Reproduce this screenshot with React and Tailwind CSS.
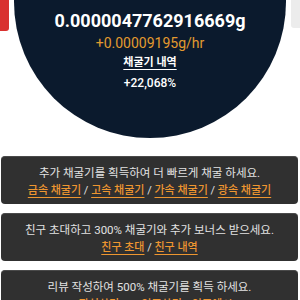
export default function App() {
  const font = { fontFamily: 'Roboto, "Noto Sans CJK KR", sans-serif' };
  return (
    <div className="relative w-[300px] h-[300px] overflow-hidden bg-white" style={font}>
      <div className="absolute left-0 top-0 w-[9px] h-[31px] bg-[#d9312f] rounded-br-[3px]" />
      <div className="absolute right-0 top-0 w-[9px] h-[28px] bg-[#ececec] rounded-bl-[3px]" />

      <div className="mx-auto -mt-[134px] w-[272px] h-[272px] rounded-full bg-[#0b1a2d] flex flex-col items-center pt-[143px]">
        <div className="text-[18px] leading-[24px] font-bold text-white">0.0000047762916669g</div>
        <div className="text-[14px] leading-[20px] text-[#e39a2f]">+0.00009195g/hr</div>
        <div className="text-[11px] leading-[20px] font-bold text-white underline underline-offset-[3px]">채굴기 내역</div>
        <div className="text-[12px] leading-[20px] font-medium text-white">+22,068%</div>
      </div>

      <div className="mt-[18px] ml-px mr-[2px] flex flex-col gap-[9px]">
        <div className="rounded-[4px] bg-[#303030] border-t border-[#4a4a4a] pt-[7px] pb-[4px] text-center leading-[18px]">
          <div className="text-[11.5px] text-[#e2e2e2]">추가 채굴기를 획득하여 더 빠르게 채굴 하세요.</div>
          <div className="text-[11px] text-[#e2e2e2]">
            <span className="text-[#ee9630] font-medium underline underline-offset-[3px]">금속 채굴기</span> /{' '}
            <span className="text-[#ee9630] font-medium underline underline-offset-[3px]">고속 채굴기</span> /{' '}
            <span className="text-[#ee9630] font-medium underline underline-offset-[3px]">가속 채굴기</span> /{' '}
            <span className="text-[#ee9630] font-medium underline underline-offset-[3px]">광속 채굴기</span>
          </div>
        </div>

        <div className="rounded-[4px] bg-[#303030] border-t border-[#4a4a4a] pt-[7px] pb-[4px] text-center leading-[18px]">
          <div className="text-[11.5px] text-[#e2e2e2]">친구 초대하고 300% 채굴기와 추가 보너스 받으세요.</div>
          <div className="text-[11px] text-[#e2e2e2]">
            <span className="text-[#ee9630] font-medium underline underline-offset-[3px]">친구 초대</span> /{' '}
            <span className="text-[#ee9630] font-medium underline underline-offset-[3px]">친구 내역</span>
          </div>
        </div>

        <div className="rounded-[4px] bg-[#303030] border-t border-[#4a4a4a] pt-[7px] pb-[4px] text-center leading-[18px]">
          <div className="text-[11.5px] text-[#e2e2e2]">리뷰 작성하여 500% 채굴기를 획득 하세요.</div>
          <div className="text-[11px] text-[#e2e2e2]">
            <span className="text-[#ee9630] font-medium underline underline-offset-[3px]">1. 작성하기</span> /{' '}
            <span className="text-[#ee9630] font-medium underline underline-offset-[3px]">2. 인증하기</span> /{' '}
            <span className="text-[#ee9630] font-medium underline underline-offset-[3px]">인증예시</span>
          </div>
        </div>
      </div>
    </div>
  );
}
